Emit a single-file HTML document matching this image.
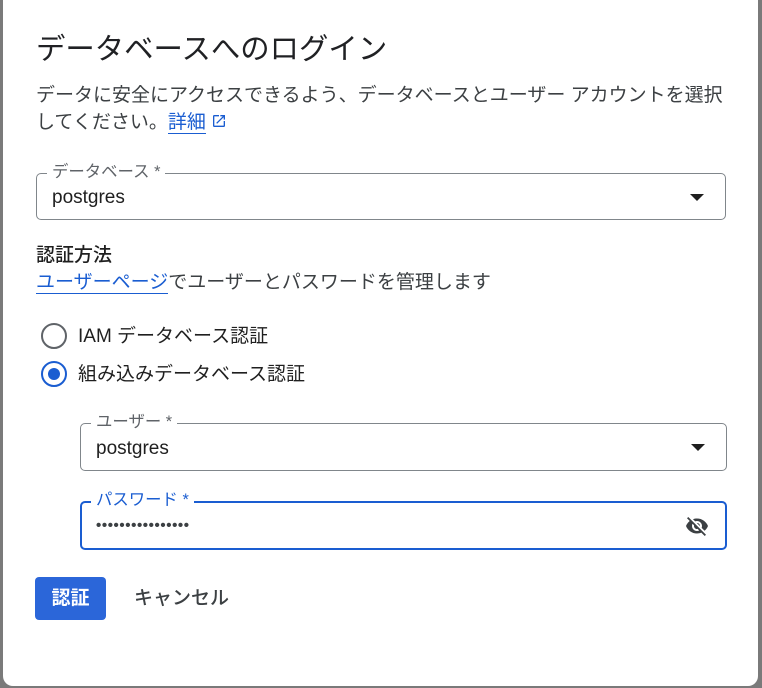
<!DOCTYPE html>
<html><head><meta charset="utf-8"><style>
*{box-sizing:border-box;margin:0;padding:0}
body{width:762px;height:688px;background:#7a7a7a;font-family:"Liberation Sans","Noto Sans CJK JP",sans-serif;color:#1f1f1f;position:relative;overflow:hidden}
.dlg{position:absolute;left:3px;top:-10px;width:755px;height:696px;background:#fff;border-radius:10px}
.a{position:absolute;white-space:nowrap}
.f{position:absolute;border:1px solid #80868b;border-radius:5px}
.lbl{position:absolute;top:-11px;left:10px;background:#fff;padding:0 5px;font-size:16.4px;color:#5f6368;line-height:19px}
.val{position:absolute;left:15px;font-size:19px;line-height:22px}
.tri{position:absolute;width:0;height:0;border-left:7px solid transparent;border-right:7px solid transparent;border-top:7px solid #1f1f1f}
.rad{position:absolute;width:26px;height:26px;border-radius:50%;border:2px solid #5f6368}
a{color:#1a5dd1;text-decoration:none}
</style></head><body>
<div class="dlg"></div>
<div class="a" style="left:36px;top:31px;font-size:29.4px;line-height:38px;color:#202124">データベースへのログイン</div>
<div class="a" style="left:36px;top:82px;font-size:19px;line-height:27px;color:#3c4043">データに安全にアクセスできるよう、データベースとユーザー アカウントを選択<br>してください。<a style="border-bottom:1px solid #1a5dd1">詳細</a> <svg width="16" height="16" viewBox="0 0 24 24" style="vertical-align:-1px"><path d="M19 19H5V5h7V3H5a2 2 0 0 0-2 2v14a2 2 0 0 0 2 2h14a2 2 0 0 0 2-2v-7h-2v7zM14 3v2h3.6l-9.8 9.8 1.4 1.4L19 6.4V10h2V3h-7z" fill="#1a5dd1"/></svg></div>

<div class="f" style="left:36px;top:173px;width:690px;height:47px">
<div class="lbl">データベース *</div>
<div class="val" style="top:13px">postgres</div>
<div class="tri" style="left:653px;top:20px"></div></div>

<div class="a" style="left:36px;top:244px;font-size:19px;line-height:24px;font-weight:500">認証方法</div>
<div class="a" style="left:36px;top:271px;font-size:19px;line-height:24px;color:#3c4043"><a style="border-bottom:1px solid #1a5dd1">ユーザーページ</a>でユーザーとパスワードを管理します</div>

<div class="rad" style="left:41px;top:323px"></div>
<div class="a" style="left:78px;top:325px;font-size:19px;line-height:24px">IAM データベース認証</div>
<div class="rad" style="left:41px;top:361px;border-color:#1a5dd1"><div style="position:absolute;left:5px;top:5px;width:12px;height:12px;border-radius:50%;background:#1a5dd1"></div></div>
<div class="a" style="left:78px;top:363px;font-size:19px;line-height:24px">組み込みデータベース認証</div>

<div class="f" style="left:80px;top:423px;width:647px;height:48px">
<div class="lbl">ユーザー *</div>
<div class="val" style="top:14px">postgres</div>
<div class="tri" style="left:610px;top:20px"></div></div>

<div class="f" style="left:80px;top:501px;width:647px;height:49px;border:2px solid #1a5dd1">
<div class="lbl" style="top:-12px;left:9px;color:#1a5dd1">パスワード *</div>
<div class="val" style="top:12px;left:14px;font-size:15px;letter-spacing:0.6px;font-weight:bold;color:#3c4043">••••••••••••••••</div>
<svg style="position:absolute;left:603px;top:11px" width="24" height="24" viewBox="0 0 24 24"><path fill="#3c4043" d="M12 7c2.76 0 5 2.240 5 5 0 .65-.13 1.26-.36 1.830l2.92 2.92c1.51-1.26 2.7-2.89 3.43-4.75-1.73-4.39-6-7.5-11-7.5-1.4 0-2.74.25-3.98.7l2.16 2.16C10.74 7.130 11.35 7 12 7zM2 4.27l2.28 2.28.46.46A11.8 11.8 0 0 0 1 12c1.730 4.39 6 7.5 11 7.5 1.550 0 3.030-.3 4.380-.84l.42.42L19.73 22 21 20.73 3.27 3 2 4.27zM7.53 9.8l1.55 1.55c-.05.21-.08.43-.08.65 0 1.66 1.34 3 3 3 .22 0 .44-.03.65-.08l1.55 1.55c-.67.33-1.41.53-2.2.53-2.76 0-5-2.24-5-5 0-.79.2-1.53.53-2.2zm4.31-.78 3.15 3.15.02-.16c0-1.66-1.34-3-3-3l-.17.01z"/></svg>
</div>

<div class="a" style="left:35px;top:577px;width:71px;height:43px;background:#2b66d9;border-radius:4px;color:#fff;font-size:19px;font-weight:bold;line-height:43px;text-align:center">認証</div>
<div class="a" style="left:134px;top:587px;font-size:19px;line-height:24px;color:#3c4043;font-weight:500">キャンセル</div>
</body></html>
